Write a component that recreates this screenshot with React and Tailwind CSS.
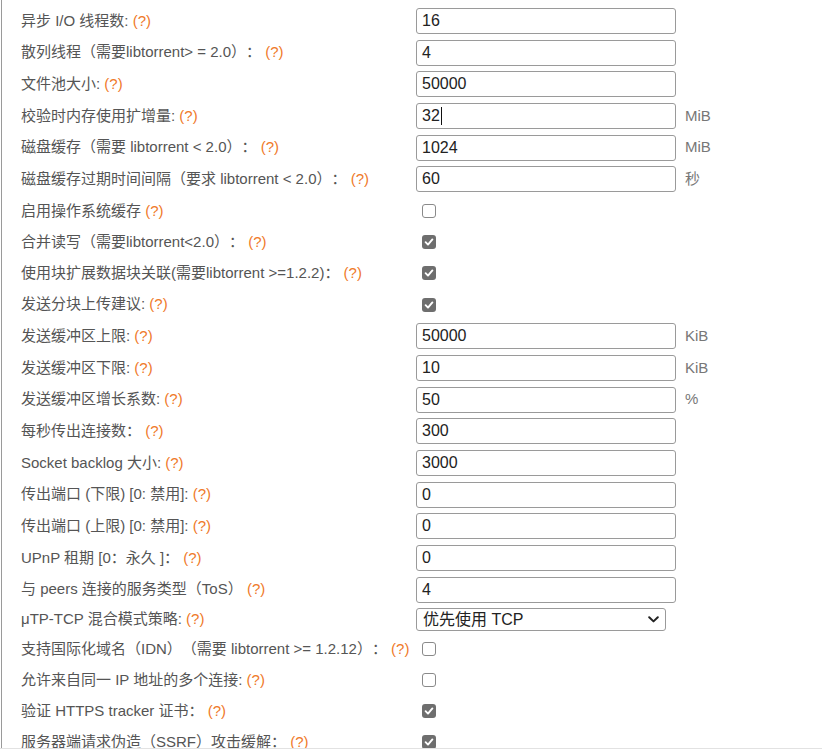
import React from "react";

const rows = [
  { label: "异步 I/O 线程数:", type: "input", value: "16" },
  { label: "散列线程（需要libtorrent> = 2.0）：", type: "input", value: "4" },
  { label: "文件池大小:", type: "input", value: "50000" },
  { label: "校验时内存使用扩增量:", type: "input", value: "32", unit: "MiB", caret: true },
  { label: "磁盘缓存（需要 libtorrent < 2.0）：", type: "input", value: "1024", unit: "MiB" },
  { label: "磁盘缓存过期时间间隔（要求 libtorrent < 2.0）：", type: "input", value: "60", unit: "秒" },
  { label: "启用操作系统缓存", type: "check", checked: false, tall: true },
  { label: "合并读写（需要libtorrent<2.0）：", type: "check", checked: true, tall: true },
  { label: "使用块扩展数据块关联(需要libtorrent >=1.2.2)：", type: "check", checked: true, tall: true },
  { label: "发送分块上传建议:", type: "check", checked: true, tall: true },
  { label: "发送缓冲区上限:", type: "input", value: "50000", unit: "KiB" },
  { label: "发送缓冲区下限:", type: "input", value: "10", unit: "KiB" },
  { label: "发送缓冲区增长系数:", type: "input", value: "50", unit: "%" },
  { label: "每秒传出连接数：", type: "input", value: "300" },
  { label: "Socket backlog 大小:", type: "input", value: "3000" },
  { label: "传出端口 (下限) [0: 禁用]:", type: "input", value: "0" },
  { label: "传出端口 (上限) [0: 禁用]:", type: "input", value: "0" },
  { label: "UPnP 租期 [0：永久 ]：", type: "input", value: "0" },
  { label: "与 peers 连接的服务类型（ToS）", type: "input", value: "4" },
  { label: "μTP-TCP 混合模式策略:", type: "select", value: "优先使用 TCP" },
  { label: "支持国际化域名（IDN）（需要 libtorrent >= 1.2.12）：", type: "check", checked: false },
  { label: "允许来自同一 IP 地址的多个连接:", type: "check", checked: false },
  { label: "验证 HTTPS tracker 证书：", type: "check", checked: true },
  { label: "服务器端请求伪造（SSRF）攻击缓解：", type: "check", checked: true },
];

function Checkbox({ checked }) {
  if (checked) {
    return (
      <span className="ml-[6px] flex h-[14px] w-[14px] items-center justify-center rounded-[3px] bg-[#6e6e6e]">
        <svg width="10" height="10" viewBox="0 0 10 10">
          <path d="M1.6 5.2 L4 7.6 L8.4 2.4" fill="none" stroke="#ffffff" strokeWidth="1.9" strokeLinecap="round" strokeLinejoin="round" />
        </svg>
      </span>
    );
  }
  return <span className="ml-[6px] block h-[14px] w-[14px] rounded-[3px] border border-[#8a8a8a] bg-white" />;
}

function Control({ row }) {
  if (row.type === "input") {
    return (
      <div className="flex items-center">
        <div className="flex h-[26px] w-[260px] items-center rounded-[3px] border border-[#9a9a9a] bg-white pl-[5px] text-[16px] text-[#222]">
          <span>{row.value}</span>
          {row.caret && <span className="ml-[1px] block h-[18px] w-px bg-[#111]" />}
        </div>
        {row.unit && <span className="ml-[9px] text-[15px] text-[#777]">{row.unit}</span>}
      </div>
    );
  }
  if (row.type === "select") {
    return (
      <div className="flex h-[23px] w-[250px] items-center justify-between rounded-[3px] border border-[#9a9a9a] bg-white pl-[6px] pr-[6px] text-[16px] text-[#222]">
        <span>{row.value}</span>
        <svg width="11" height="7" viewBox="0 0 11 7">
          <path d="M1.2 1.2 L5.5 5.4 L9.8 1.2" fill="none" stroke="#222" strokeWidth="2" strokeLinecap="round" strokeLinejoin="round" />
        </svg>
      </div>
    );
  }
  return <Checkbox checked={row.checked} />;
}

export default function App() {
  return (
    <div
      className="h-[749px] w-[822px] overflow-hidden border-b border-[#e2e2e2] bg-white [text-spacing-trim:space-all]"
      style={{ fontFamily: '"Liberation Sans", Arial, "Noto Sans CJK SC", sans-serif' }}
    >
      <div className="ml-px border-l border-[#9a9a9a] pt-[5px]">
        {rows.map((row, i) => {
          const h =
            row.type === "input"
              ? "h-[31.7px]"
              : row.type === "select"
              ? "h-[28px]"
              : row.tall
              ? "h-[31.3px]"
              : "h-[31px]";
          return (
            <div key={i} className={`flex items-center ${h}`}>
              <div className="w-[414px] shrink-0 whitespace-nowrap pl-[19px] text-[15px] text-[#555]">
                {row.label} <span className="text-[#ef7a2a]">(?)</span>
              </div>
              <Control row={row} />
            </div>
          );
        })}
      </div>
    </div>
  );
}
